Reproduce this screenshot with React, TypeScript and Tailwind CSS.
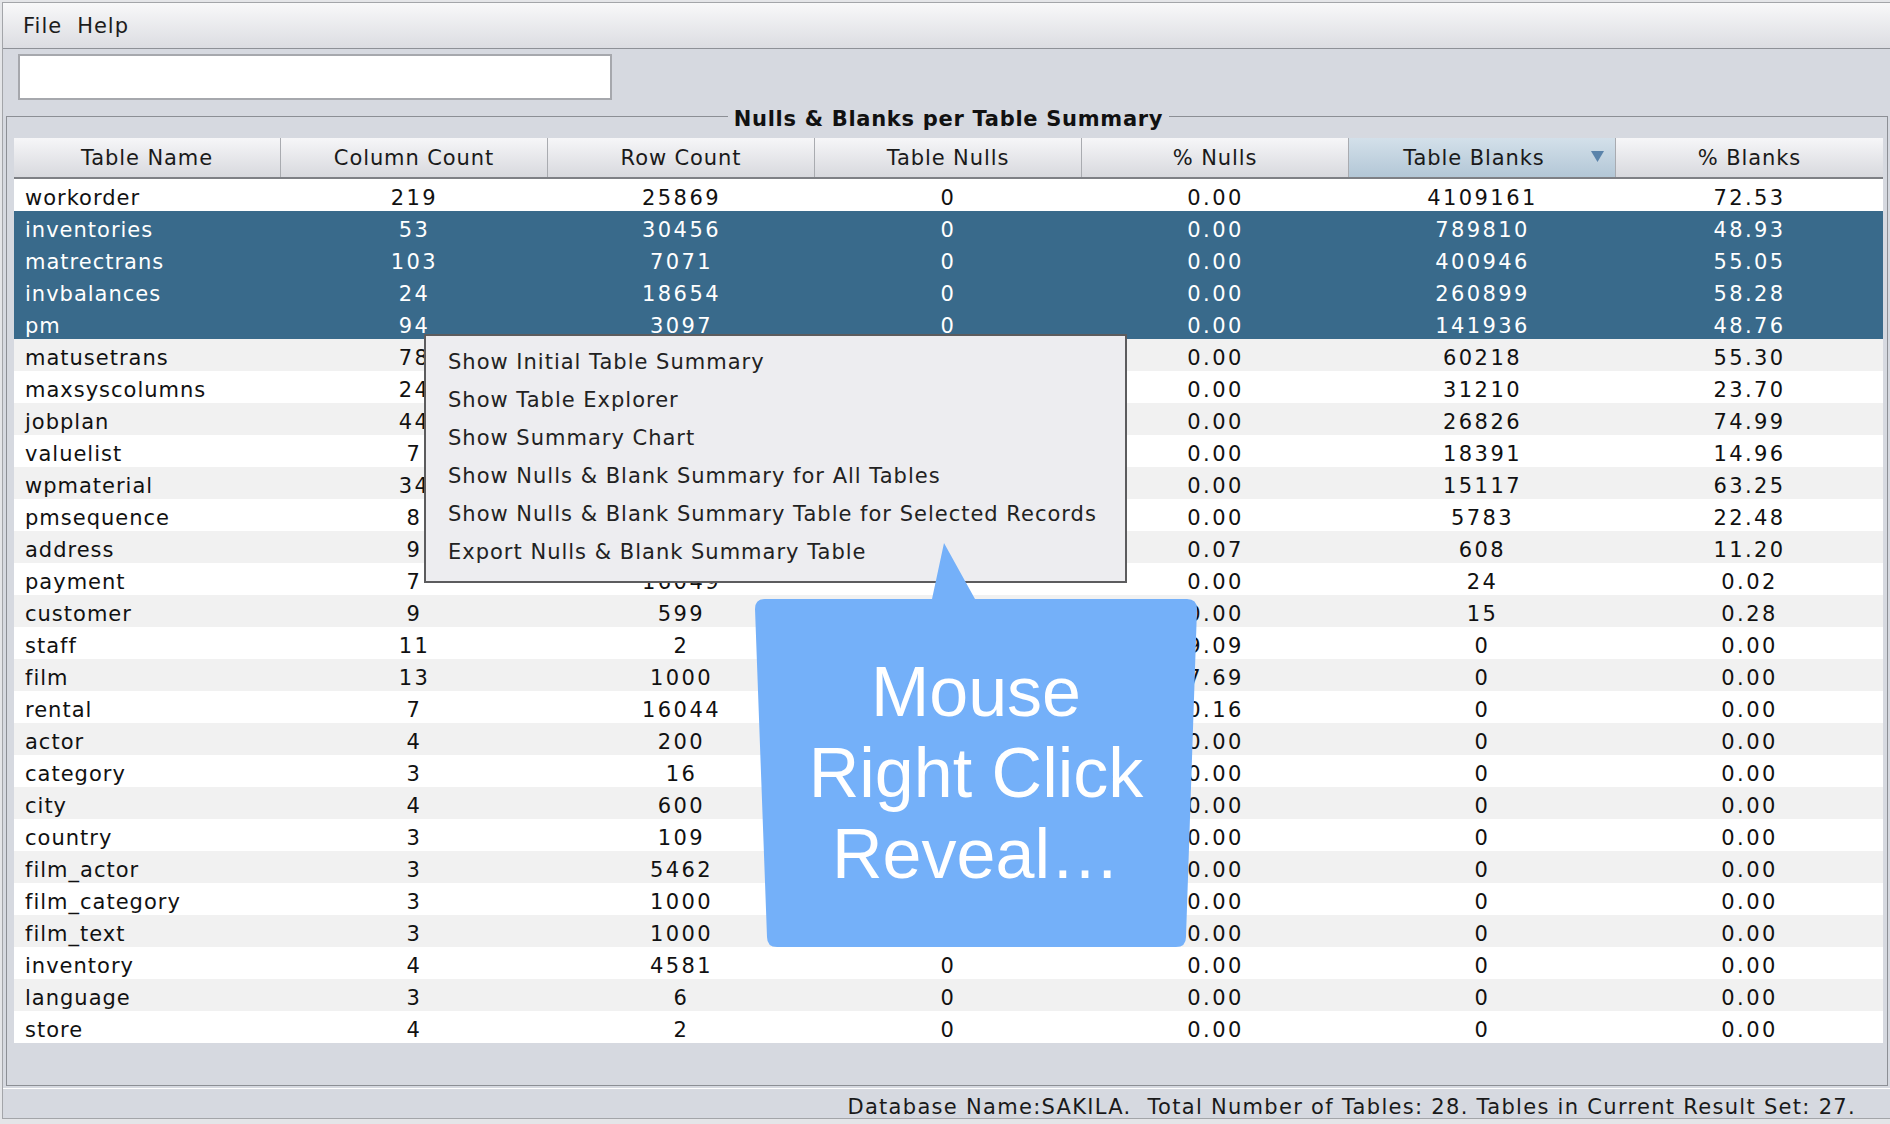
import React from "react";

type Row = [string, string, string, string, string, string, string];

const headers = [
  "Table Name",
  "Column Count",
  "Row Count",
  "Table Nulls",
  "% Nulls",
  "Table Blanks",
  "% Blanks",
];

const rows: Row[] = [
  ["workorder", "219", "25869", "0", "0.00", "4109161", "72.53"],
  ["inventories", "53", "30456", "0", "0.00", "789810", "48.93"],
  ["matrectrans", "103", "7071", "0", "0.00", "400946", "55.05"],
  ["invbalances", "24", "18654", "0", "0.00", "260899", "58.28"],
  ["pm", "94", "3097", "0", "0.00", "141936", "48.76"],
  ["matusetrans", "78", "14211", "0", "0.00", "60218", "55.30"],
  ["maxsyscolumns", "24", "5488", "0", "0.00", "31210", "23.70"],
  ["jobplan", "44", "814", "0", "0.00", "26826", "74.99"],
  ["valuelist", "7", "17562", "0", "0.00", "18391", "14.96"],
  ["wpmaterial", "34", "703", "0", "0.00", "15117", "63.25"],
  ["pmsequence", "8", "3214", "0", "0.00", "5783", "22.48"],
  ["address", "9", "603", "4", "0.07", "608", "11.20"],
  ["payment", "7", "16049", "5", "0.00", "24", "0.02"],
  ["customer", "9", "599", "0", "0.00", "15", "0.28"],
  ["staff", "11", "2", "2", "9.09", "0", "0.00"],
  ["film", "13", "1000", "1000", "7.69", "0", "0.00"],
  ["rental", "7", "16044", "183", "0.16", "0", "0.00"],
  ["actor", "4", "200", "0", "0.00", "0", "0.00"],
  ["category", "3", "16", "0", "0.00", "0", "0.00"],
  ["city", "4", "600", "0", "0.00", "0", "0.00"],
  ["country", "3", "109", "0", "0.00", "0", "0.00"],
  ["film_actor", "3", "5462", "0", "0.00", "0", "0.00"],
  ["film_category", "3", "1000", "0", "0.00", "0", "0.00"],
  ["film_text", "3", "1000", "0", "0.00", "0", "0.00"],
  ["inventory", "4", "4581", "0", "0.00", "0", "0.00"],
  ["language", "3", "6", "0", "0.00", "0", "0.00"],
  ["store", "4", "2", "0", "0.00", "0", "0.00"],
];

// rows 1..4 are the selected block
const selected = new Set([1, 2, 3, 4]);

const menuItems = [
  "Show Initial Table Summary",
  "Show Table Explorer",
  "Show Summary Chart",
  "Show Nulls & Blank Summary for All Tables",
  "Show Nulls & Blank Summary Table for Selected Records",
  "Export Nulls & Blank Summary Table",
];

const App = () => {
  return (
    <div className="relative w-[1890px] h-[1124px] overflow-hidden bg-[#e4e5e8] font-['DejaVu_Sans',sans-serif] text-[#111]">
      <div className="ml-[2px] mt-[2px] h-[1117px] flex flex-col bg-[#d6d9e0] border-l border-t border-b border-[#a3a5a9]">
        {/* menu bar */}
        <div className="h-[46px] flex items-center gap-[15px] pl-[20px] pt-[2px] text-[21px] tracking-[1px] text-[#1c1c1c] bg-gradient-to-b from-[#f8f8f9] to-[#dcdde2] border-b border-[#8e9197]">
          <span>File</span>
          <span>Help</span>
        </div>

        {/* search field */}
        <div className="mt-[5px] ml-[15px] w-[594px] h-[46px] bg-white border-2 border-[#a6a8ad]" />

        {/* titled panel */}
        <fieldset className="mt-[1px] ml-[3px] mr-[2px] flex-1 min-h-0 border border-[#8c8f95] pl-[7px] pr-[4px] pt-[7px]">
          <legend className="mx-auto px-[6px] pt-[6px] text-[21px] leading-[24px] tracking-[0.7px] font-bold text-[#111]">
            Nulls &amp; Blanks per Table Summary
          </legend>

          {/* header */}
          <div className="grid grid-cols-7 h-[41px] border-b-2 border-[#7e8085] text-[21px] tracking-[0.9px] text-[#1a1a1a]">
            {headers.map((h, i) => (
              <div
                key={h}
                className={`relative flex items-center justify-center pt-[2px] ${
                  i < 6 ? "border-r border-[#a9abb0]" : ""
                } ${
                  i === 5
                    ? "pr-[16px] bg-gradient-to-b from-[#d3e0ea] to-[#b3c7d6]"
                    : "bg-gradient-to-b from-[#f6f6f8] to-[#d8d9de]"
                }`}
              >
                {h}
                {i === 5 && (
                  <svg
                    className="absolute right-[11px] top-[13px]"
                    width="13"
                    height="11"
                    viewBox="0 0 13 11"
                  >
                    <path d="M0 0 H13 L6.5 11 Z" fill="#5a83aa" />
                  </svg>
                )}
              </div>
            ))}
          </div>

          {/* rows */}
          {rows.map((r, idx) => {
            const sel = selected.has(idx);
            const bg = sel
              ? "bg-[#396a8b] text-white"
              : idx % 2 === 1
              ? "bg-[#f1f1f1]"
              : "bg-white";
            return (
              <div
                key={r[0]}
                className={`grid grid-cols-7 h-[32px] items-center pt-[7px] text-[21px] leading-[25px] ${bg}`}
              >
                {r.map((c, i) => (
                  <div
                    key={i}
                    className={
                      i === 0
                        ? "pl-[11px] tracking-[1px]"
                        : "text-center tracking-[2.4px]"
                    }
                  >
                    {c}
                  </div>
                ))}
              </div>
            );
          })}
        </fieldset>

        {/* status bar */}
        <div className="mt-[2px] h-[30px] flex items-center justify-end pr-[34px] pt-[8px] text-[21px] tracking-[1.3px] text-[#1a1a1a] border-t border-white">
          Database Name:SAKILA.&nbsp; Total Number of Tables: 28. Tables in
          Current Result Set: 27.
        </div>
      </div>

      {/* context menu */}
      <div className="absolute left-[424px] top-[334px] w-[703px] h-[249px] bg-[#ededf0] border-2 border-[#5c5c5e] pt-[8px] text-[21px] tracking-[1px] text-[#222]">
        {menuItems.map((m) => (
          <div key={m} className="h-[38px] flex items-center pl-[22px]">
            {m}
          </div>
        ))}
      </div>

      {/* callout bubble */}
      <svg
        className="absolute left-[755px] top-[543px]"
        width="443"
        height="405"
        viewBox="0 0 443 405"
      >
        <path
          d="M10 56 L177 56 L189 0 L220 56 L432 56 Q442 56 442 66 L431 394 Q431 404 421 404 L22 404 Q12 404 12 394 L0 66 Q0 56 10 56 Z"
          fill="#74b0f9"
        />
      </svg>
      <div className="absolute left-[755px] top-[599px] w-[442px] h-[348px] flex items-center justify-center text-center text-white font-['Liberation_Sans',Arial,sans-serif] text-[70px] leading-[81px]">
        Mouse
        <br />
        Right Click
        <br />
        Reveal…
      </div>
    </div>
  );
};

export default App;
